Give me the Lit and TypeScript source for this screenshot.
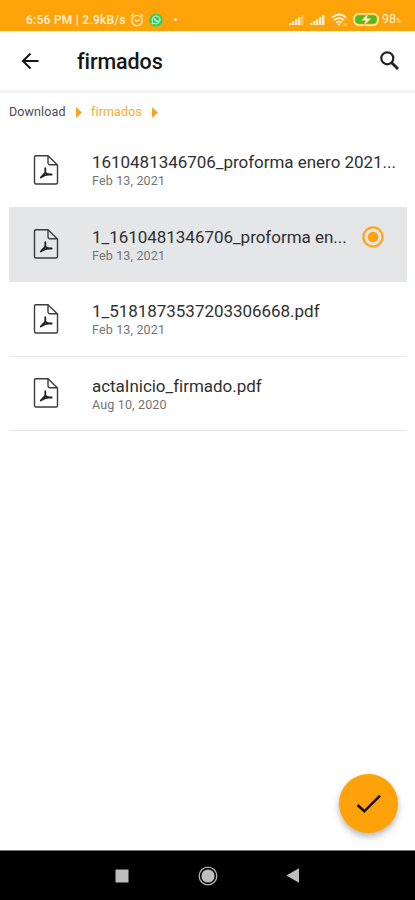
import { LitElement, html, css, svg } from "lit";
import { customElement, property } from "lit/decorators.js";

interface FileEntry {
  name: string;
  date: string;
  selected?: boolean;
}

const files: FileEntry[] = [
  { name: "1610481346706_proforma enero 2021...", date: "Feb 13, 2021" },
  { name: "1_1610481346706_proforma en...", date: "Feb 13, 2021", selected: true },
  { name: "1_5181873537203306668.pdf", date: "Feb 13, 2021" },
  { name: "actaInicio_firmado.pdf", date: "Aug 10, 2020" },
];

@customElement("status-bar")
class StatusBar extends LitElement {
  static styles = css`
    :host {
      display: flex;
      align-items: center;
      height: 31px;
      box-sizing: border-box;
      padding: 8px 12px 0 26px;
      background: #ffa30a;
      color: #fff3d8;
      font: 500 12px/16px Roboto, sans-serif;
      white-space: nowrap;
    }
    .time { width: 101px; letter-spacing: 0.26px; }
    svg { display: block; flex: none; }
    .alarm { margin-left: 3px; }
    .chat { margin-left: 5px; }
    .dot { width: 3px; height: 3px; border-radius: 50%; background: #fff3d8; margin-left: 11px; }
    .gap { flex: 1; }
    .signal { margin-right: 5px; }
    .wifi { margin-right: 5px; margin-left: 1px; }
    .pct { margin-left: 3px; width: 21px; font-size: 12.5px; font-weight: 400; }
    .pct small { font-size: 7px; }
  `;

  signal(bars: number) {
    return html`<svg class="signal" width="16" height="11" viewBox="0 0 16 11">
      ${[0, 1, 2, 3, 4].map(
        (i) => svg`<rect x=${1 + i * 3} y=${9 - i * 2} width="2.4" height=${2 + i * 2}
          fill="#fff3d8" opacity=${i < bars ? 0.95 : 0.4} />`
      )}
    </svg>`;
  }

  render() {
    return html`
      <span class="time">6:56 PM | 2.9kB/s</span>
      <svg class="alarm" width="14" height="14" viewBox="0 0 14 14" fill="none" stroke="#fff3d8" stroke-width="1.2">
        <circle cx="7" cy="7.6" r="5.2" />
        <path d="M1 3.2 3.5 1M13 3.2 10.5 1M4.7 6.6 7 8.4l2.5-2" />
      </svg>
      <svg class="chat" width="14" height="14" viewBox="0 0 14 14">
        <circle cx="7" cy="7" r="6.6" fill="#2bd05b" />
        <path d="M3 11l.6-2.2A4 4 0 1 1 5.2 10.4Z" fill="none" stroke="#e8ffe0" stroke-width="1" />
        <path d="M5.4 5q.3 3 3.4 3.8l.6-1.2" fill="none" stroke="#e8ffe0" stroke-width="1.2" />
      </svg>
      <span class="dot"></span>
      <span class="gap"></span>
      ${this.signal(4)} ${this.signal(5)}
      <svg class="wifi" width="17" height="14" viewBox="0 0 17 14" fill="none" stroke="#fff3d8" stroke-width="1.8">
        <path d="M.8 4.6Q8 -1.6 15.2 4.6M3 7.3Q8 3 13 7.3M5.3 9.8Q8 7.5 10.7 9.8" />
        <path d="M6.3 10.7h3.4L8 13Z" fill="#fff3d8" stroke="none" />
        <path d="M13 10v3M15 10v3" stroke-width="1" opacity=".7" />
      </svg>
      <svg width="26" height="13" viewBox="0 0 26 13">
        <rect x=".8" y=".8" width="24.4" height="11.4" rx="5.2" fill="#ffb32e" stroke="#fff0bd" stroke-width="1.4" />
        <rect x="2.3" y="2.3" width="21.4" height="8.4" rx="3.8" fill="#55b91b" />
        <path d="M15 .6 8.5 7.4h4L11 12.6l7-7.2h-4.2Z" fill="#fff7d8" stroke="#e2b63e" stroke-width=".6" />
      </svg>
      <span class="pct">98<small>%</small></span>
    `;
  }
}

@customElement("file-row")
class FileRow extends LitElement {
  @property({ attribute: false }) file!: FileEntry;

  static styles = css`
    :host { display: block; }
    .row {
      display: flex;
      height: 74.4px;
      box-sizing: border-box;
      margin: 0 8px 0 9px;
      border-bottom: 1px solid #e6e6e6;
      color: #303030;
    }
    .selected { background: #e5e6e8; border-color: #e5e6e8; }
    .icon { display: block; flex: none; margin: 20.4px 0 0 24px; }
    .text { margin: 18.1px 0 0 33px; flex: 1; min-width: 0; white-space: nowrap; font-family: Roboto, sans-serif; }
    .name { font-size: 17px; line-height: 22px; letter-spacing: -0.03px; }
    .date { font-size: 12.5px; line-height: 16px; letter-spacing: 0.16px; color: #747474; }
    .radio { display: block; flex: none; margin: 18px 23px 0 0; }
  `;

  render() {
    const f = this.file;
    return html`<div class="row ${f.selected ? "selected" : ""}">
      <svg class="icon" width="26" height="32" viewBox="0 0 26 32" fill="none" stroke="#3c3c3c" stroke-width="1.4">
        <path d="M15 1.7H3Q1.5 1.7 1.5 3.2V28.5Q1.5 30 3 30H23Q24.5 30 24.5 28.5V11Z" stroke-linejoin="round" />
        <path d="M15 1.7V9Q15 10.7 16.7 10.7H24.5" />
        <path d="M12.3 14.2V18.5L7.8 23.5M12.3 18.5Q14 20.7 18.7 20.5M8 23.3Q12 20.2 18.5 20.5" stroke="#222" stroke-width="1.8" stroke-linecap="round" stroke-linejoin="round" />
      </svg>
      <div class="text">
        <div class="name">${f.name}</div>
        <div class="date">${f.date}</div>
      </div>
      ${f.selected
        ? html`<svg class="radio" width="22" height="22" viewBox="0 0 22 22">
            <circle cx="11" cy="11" r="9.6" fill="none" stroke="#ffa51a" stroke-width="2.2" />
            <circle cx="11" cy="11" r="5.3" fill="#ffa20a" />
          </svg>`
        : ""}
    </div>`;
  }
}

@customElement("app-root")
class AppRoot extends LitElement {
  static styles = css`
    :host {
      display: flex;
      flex-direction: column;
      position: relative;
      height: 900px;
      background: #fff;
      font-family: Roboto, sans-serif;
      overflow: hidden;
    }
    svg { display: block; flex: none; }
    .bar {
      display: flex;
      align-items: center;
      height: 59px;
      padding: 0 14px 0 20px;
      border-bottom: 3px solid #f2f2f2;
    }
    .title {
      flex: 1;
      margin: 2px 0 0 35px;
      font-size: 21.5px;
      line-height: 28px;
      font-weight: 500;
      letter-spacing: -0.08px;
      color: #161616;
    }
    .crumbs {
      display: flex;
      align-items: center;
      height: 40px;
      box-sizing: border-box;
      padding: 0 0 2px 9px;
      font-size: 12.5px;
      line-height: 16px;
      letter-spacing: 0.12px;
      color: #4b4b4b;
      white-space: nowrap;
    }
    .crumb { width: 57px; }
    .current { width: 51px; margin-left: 9px; color: #f9ab30; }
    .tri { margin-left: 10px; }
    .list { flex: 1; padding-top: 0.4px; }
    .fab {
      position: absolute;
      right: 17px;
      bottom: 67px;
      width: 59px;
      height: 59px;
      border-radius: 50%;
      display: grid;
      place-items: center;
      background: #ffa20a;
      box-shadow: 0 3px 5px rgba(0, 0, 0, 0.18), 0 5px 10px rgba(0, 0, 0, 0.12);
    }
    .nav {
      display: flex;
      align-items: center;
      height: 50px;
      box-sizing: border-box;
      background: #000;
      border-top: 1px solid #777;
      padding-left: 115px;
    }
    .home { margin-left: 69px; }
    .back { margin-left: 68px; }
  `;

  arrow() {
    return html`<svg class="tri" width="6" height="11" viewBox="0 0 6 11"><path d="M0 0 6 5.5 0 11Z" fill="#ffa11a" /></svg>`;
  }

  render() {
    return html`
      <status-bar></status-bar>
      <div class="bar">
        <svg width="22" height="20" viewBox="0 0 22 20" fill="none" stroke="#161616" stroke-width="2">
          <path d="M18.5 10H3M10.5 2.5 3 10l7.5 7.5" />
        </svg>
        <span class="title">firmados</span>
        <svg width="22" height="22" viewBox="0 0 22 22" fill="none" stroke="#222">
          <circle cx="8.3" cy="8.3" r="6" stroke-width="2.2" />
          <path d="M12.5 12.5 19 19" stroke-width="2.8" />
        </svg>
      </div>
      <div class="crumbs">
        <span class="crumb">Download</span>${this.arrow()}
        <span class="crumb current">firmados</span>${this.arrow()}
      </div>
      <div class="list">${files.map((f) => html`<file-row .file=${f}></file-row>`)}</div>
      <div class="fab">
        <svg width="27" height="22" viewBox="0 0 27 22" fill="none" stroke="#15120a" stroke-width="2.6">
          <path d="M2.5 12 9.3 18.3 25 2.6" />
        </svg>
      </div>
      <div class="nav">
        <svg width="14" height="14" viewBox="0 0 14 14"><rect x=".5" y=".5" width="13" height="13" fill="#bdbdbd" /></svg>
        <svg class="home" width="20" height="20" viewBox="0 0 20 20">
          <circle cx="10" cy="10" r="8.8" fill="none" stroke="#b5b5b5" stroke-width="1.3" />
          <circle cx="10" cy="10" r="6.6" fill="#bdbdbd" />
        </svg>
        <svg class="back" width="13" height="15" viewBox="0 0 13 15"><path d="M13 .3V14.7L.3 7.5Z" fill="#bdbdbd" /></svg>
      </div>
    `;
  }
}
